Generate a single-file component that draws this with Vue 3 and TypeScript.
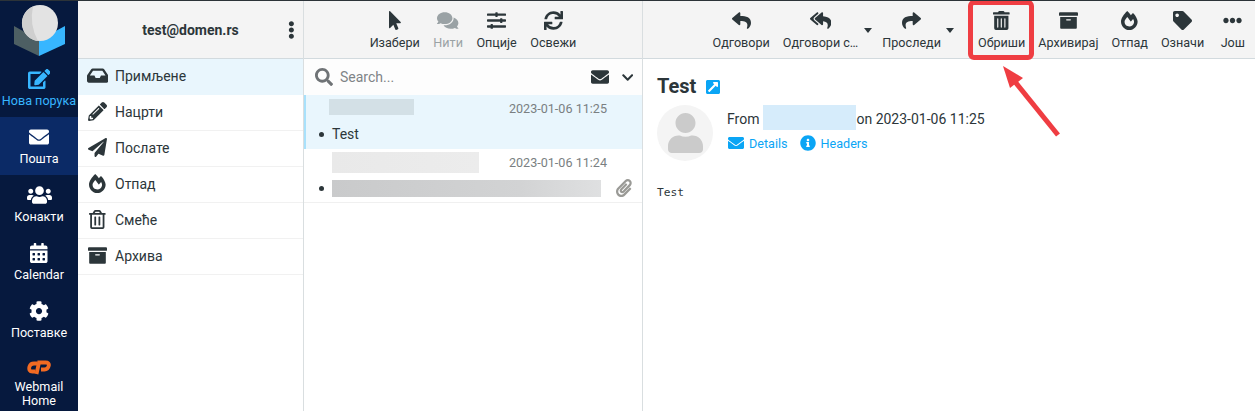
<script setup lang="ts">
type Icon = { w: number; d: string }

const icons: Record<string, Icon> = {
  envelope: { w: 512, d: 'M502.3 190.8c3.9-3.1 9.7-.2 9.7 4.7V400c0 26.5-21.5 48-48 48H48c-26.5 0-48-21.5-48-48V195.6c0-5 5.7-7.8 9.7-4.7 22.4 17.4 52.1 39.5 154.1 113.6 21.1 15.4 56.7 47.8 92.2 47.6 35.7.3 72-32.8 92.3-47.6 102-74.1 131.6-96.3 154-113.7zM256 320c23.2.4 56.6-29.2 73.4-41.4 132.7-96.3 142.8-104.7 173.4-128.7 5.8-4.5 9.2-11.5 9.2-18.9v-19c0-26.5-21.5-48-48-48H48C21.5 64 0 85.5 0 112v19c0 7.4 3.4 14.3 9.2 18.9 30.6 23.9 40.7 32.4 173.4 128.7 16.8 12.2 50.2 41.8 73.4 41.4z' },
  reply: { w: 512, d: 'M8.309 189.836L184.313 37.851C199.719 24.546 224 35.347 224 56.015v80.053c160.629 1.839 288 34.032 288 186.258 0 61.441-39.581 122.309-83.333 154.132-13.653 9.931-33.111-2.533-28.077-18.631 45.344-145.012-21.507-183.51-176.59-185.742V360c0 20.7-24.3 31.453-39.687 18.164l-176.004-152c-11.071-9.562-11.086-26.753 0-36.328z' },
  replyAll: { w: 576, d: 'M136.309 189.836L312.313 37.851C327.72 24.546 352 35.348 352 56.015v82.763c129.182 10.231 224 52.212 224 183.548 0 61.441-39.582 122.309-83.333 154.132-13.653 9.931-33.111-2.533-28.077-18.631 38.512-123.162-3.922-169.482-112.59-182.015v84.175c0 20.701-24.3 31.453-39.687 18.164L136.309 226.164c-11.071-9.561-11.086-26.753 0-36.328zm-128 36.328L184.313 378.15C199.7 391.439 224 380.687 224 359.986v-15.818l-108.606-93.785A55.96 55.96 0 0 1 96 207.998a55.953 55.953 0 0 1 19.393-42.38L224 71.832V56.015c0-20.667-24.28-31.469-39.687-18.164L8.309 189.836c-11.086 9.575-11.071 26.767 0 36.328z' },
  share: { w: 512, d: 'M503.691 189.836L327.687 37.851C312.281 24.546 288 35.347 288 56.015v80.053C127.371 137.907 0 170.1 0 322.326c0 61.441 39.581 122.309 83.333 154.132 13.653 9.931 33.111-2.533 28.077-18.631C66.066 312.814 132.917 274.316 288 272.085V360c0 20.7 24.3 31.453 39.687 18.164l176.004-152c11.071-9.562 11.086-26.753 0-36.328z' },
  trashSolid: { w: 448, d: 'M32 464a48 48 0 0 0 48 48h288a48 48 0 0 0 48-48V128H32zm272-256a16 16 0 0 1 32 0v224a16 16 0 0 1-32 0zm-96 0a16 16 0 0 1 32 0v224a16 16 0 0 1-32 0zm-96 0a16 16 0 0 1 32 0v224a16 16 0 0 1-32 0zM432 32H312l-9.4-18.7A24 24 0 0 0 281.1 0H166.8a23.72 23.72 0 0 0-21.4 13.3L136 32H16A16 16 0 0 0 0 48v32a16 16 0 0 0 16 16h416a16 16 0 0 0 16-16V48a16 16 0 0 0-16-16z' },
  trash: { w: 448, d: 'M268 416h24a12 12 0 0 0 12-12V188a12 12 0 0 0-12-12h-24a12 12 0 0 0-12 12v216a12 12 0 0 0 12 12zM432 80h-82.41l-34-56.7A48 48 0 0 0 274.41 0H173.59a48 48 0 0 0-41.16 23.3L98.41 80H16A16 16 0 0 0 0 96v16a16 16 0 0 0 16 16h16v336a48 48 0 0 0 48 48h288a48 48 0 0 0 48-48V128h16a16 16 0 0 0 16-16V96a16 16 0 0 0-16-16zM171.84 50.91A6 6 0 0 1 177 48h94a6 6 0 0 1 5.15 2.91L293.61 80H154.39zM368 464H80V128h288zm-212-48h24a12 12 0 0 0 12-12V188a12 12 0 0 0-12-12h-24a12 12 0 0 0-12 12v216a12 12 0 0 0 12 12z' },
  archive: { w: 512, d: 'M32 448c0 17.7 14.3 32 32 32h384c17.7 0 32-14.3 32-32V160H32v288zm160-212c0-6.6 5.4-12 12-12h104c6.6 0 12 5.4 12 12v8c0 6.6-5.4 12-12 12H204c-6.6 0-12-5.4-12-12v-8zM480 32H32C14.3 32 0 46.3 0 64v48c0 8.8 7.2 16 16 16h480c8.8 0 16-7.2 16-16V64c0-17.7-14.3-32-32-32z' },
  fire: { w: 448, d: 'M323.56 51.2c-20.8 19.3-39.58 39.59-56.22 59.97C240.08 73.62 206.28 35.53 168 0 69.74 91.17 0 209.96 0 281.6 0 408.85 100.29 512 224 512s224-103.15 224-230.4c0-53.27-51.98-163.14-124.44-230.4zm-19.47 340.65C282.43 407.01 255.72 416 226.86 416 154.71 416 96 368.26 96 290.75c0-38.61 24.31-72.63 72.79-130.75 6.93 7.98 98.83 125.34 98.83 125.34l58.63-66.88c4.14 6.85 7.91 13.55 11.27 19.97 27.35 52.19 15.81 118.97-33.43 153.42z' },
  tag: { w: 512, d: 'M0 252.118V48C0 21.49 21.49 0 48 0h204.118a48 48 0 0 1 33.941 14.059l211.882 211.882c18.745 18.745 18.745 49.137 0 67.882L293.823 497.941c-18.745 18.745-49.137 18.745-67.882 0L14.059 286.059A48 48 0 0 1 0 252.118zM112 64c-26.51 0-48 21.49-48 48s21.49 48 48 48 48-21.49 48-48-21.49-48-48-48z' },
  more: { w: 512, d: 'M328 256c0 39.8-32.2 72-72 72s-72-32.2-72-72 32.2-72 72-72 72 32.2 72 72zm104-72c-39.8 0-72 32.2-72 72s32.2 72 72 72 72-32.2 72-72-32.2-72-72-72zm-352 0c-39.8 0-72 32.2-72 72s32.2 72 72 72 72-32.2 72-72-32.2-72-72-72z' },
  dots: { w: 192, d: 'M96 184c39.8 0 72 32.2 72 72s-32.2 72-72 72-72-32.2-72-72 32.2-72 72-72zM24 80c0 39.8 32.2 72 72 72s72-32.2 72-72S135.8 8 96 8 24 40.2 24 80zm0 352c0 39.8 32.2 72 72 72s72-32.2 72-72-32.2-72-72-72-72 32.2-72 72z' },
  pointer: { w: 320, d: 'M302.189 329.126H196.105l55.831 135.993c3.889 9.428-.555 19.999-9.444 23.999l-49.165 21.427c-9.165 4-19.443-.571-23.332-9.714l-53.053-129.136-86.664 89.138C18.729 472.71 0 463.554 0 447.977V18.299C0 1.899 19.921-6.096 30.277 5.443l284.412 292.542c11.472 11.179 3.007 31.141-12.5 31.141z' },
  comments: { w: 576, d: 'M416 192c0-88.4-93.1-160-208-160S0 103.6 0 192c0 34.3 14.1 65.9 38 92-13.4 30.2-35.5 54.2-35.8 54.5-2.2 2.3-2.8 5.7-1.5 8.7S4.8 352 8 352c36.6 0 66.9-12.3 88.7-25 32.2 15.7 70.3 25 111.3 25 114.9 0 208-71.6 208-160zm122 220c23.9-26 38-57.7 38-92 0-66.9-53.5-124.2-129.3-148.1.9 6.6 1.3 13.3 1.3 20.1 0 105.9-107.7 192-240 192-10.8 0-21.3-.8-31.7-1.9C207.8 439.6 281.8 480 368 480c41 0 79.1-9.2 111.3-25 21.8 12.7 52.1 25 88.7 25 3.2 0 6.1-1.9 7.3-4.8 1.3-2.9.7-6.3-1.5-8.7-.3-.3-22.4-24.2-35.8-54.5z' },
  sliders: { w: 512, d: 'M496 384H160v-16c0-8.8-7.2-16-16-16h-32c-8.8 0-16 7.2-16 16v16H16c-8.8 0-16 7.2-16 16v32c0 8.8 7.2 16 16 16h80v16c0 8.8 7.2 16 16 16h32c8.8 0 16-7.2 16-16v-16h336c8.8 0 16-7.2 16-16v-32c0-8.8-7.2-16-16-16zm0-160h-80v-16c0-8.8-7.2-16-16-16h-32c-8.8 0-16 7.2-16 16v16H16c-8.8 0-16 7.2-16 16v32c0 8.8 7.2 16 16 16h336v16c0 8.8 7.2 16 16 16h32c8.8 0 16-7.2 16-16v-16h80c8.8 0 16-7.2 16-16v-32c0-8.8-7.2-16-16-16zm0-160H288V48c0-8.8-7.2-16-16-16h-32c-8.8 0-16 7.2-16 16v16H16C7.2 64 0 71.2 0 80v32c0 8.8 7.2 16 16 16h208v16c0 8.8 7.2 16 16 16h32c8.8 0 16-7.2 16-16v-16h208c8.8 0 16-7.2 16-16V80c0-8.8-7.2-16-16-16z' },
  sync: { w: 512, d: 'M440.65 12.57l4 82.77A247.16 247.16 0 0 0 255.83 8C134.73 8 33.91 94.92 12.29 209.82A12 12 0 0 0 24.09 224h49.05a12 12 0 0 0 11.67-9.26 175.91 175.91 0 0 1 317-56.94l-101.46-4.86a12 12 0 0 0-12.57 12v47.41a12 12 0 0 0 12 12H500a12 12 0 0 0 12-12V12a12 12 0 0 0-12-12h-47.37a12 12 0 0 0-11.98 12.57zM255.83 432a175.61 175.61 0 0 1-146-77.8l101.8 4.87a12 12 0 0 0 12.57-12v-47.4a12 12 0 0 0-12-12H12a12 12 0 0 0-12 12V500a12 12 0 0 0 12 12h47.35a12 12 0 0 0 12-12.6l-4.15-82.57A247.17 247.17 0 0 0 255.83 504c121.11 0 221.93-86.92 243.55-201.82a12 12 0 0 0-11.8-14.18h-49.05a12 12 0 0 0-11.67 9.26A175.86 175.86 0 0 1 255.83 432z' },
  search: { w: 512, d: 'M505 442.7L405.3 343c-4.5-4.5-10.6-7-17-7H372c27.6-35.3 44-79.7 44-128C416 93.1 322.9 0 208 0S0 93.1 0 208s93.1 208 208 208c48.3 0 92.7-16.4 128-44v16.3c0 6.4 2.5 12.5 7 17l99.7 99.7c9.4 9.4 24.6 9.4 33.9 0l28.3-28.3c9.4-9.4 9.4-24.6.1-34zM208 336c-70.7 0-128-57.2-128-128 0-70.7 57.2-128 128-128 70.7 0 128 57.2 128 128 0 70.7-57.2 128-128 128z' },
  chevron: { w: 448, d: 'M207.029 381.476L12.686 187.132c-9.373-9.373-9.373-24.569 0-33.941l22.667-22.667c9.357-9.357 24.522-9.375 33.901-.04L224 284.505l154.745-154.021c9.379-9.335 24.544-9.317 33.901.04l22.667 22.667c9.373 9.373 9.373 24.569 0 33.941L240.971 381.476c-9.373 9.372-24.569 9.372-33.942 0z' },
  clip: { w: 448, d: 'M43.246 466.142c-58.43-60.289-57.341-157.511 1.386-217.581L254.392 34c44.316-45.332 116.351-45.336 160.671 0 43.89 44.894 43.943 117.329 0 162.276L232.214 383.128c-29.855 30.537-78.633 30.111-107.982-.998-28.275-29.97-27.368-77.473 1.452-106.953l143.743-146.835c6.182-6.314 16.312-6.422 22.626-.241l22.861 22.379c6.315 6.182 6.422 16.312.241 22.626L171.427 319.927c-4.932 5.045-5.236 13.428-.648 18.292 4.372 4.634 11.245 4.711 15.688.165l182.849-186.851c19.613-20.062 19.613-52.725-.011-72.798-19.189-19.627-49.957-19.637-69.154 0L90.39 293.295c-34.763 35.56-35.299 93.12-1.191 128.313 34.01 35.093 88.985 35.137 123.058.286l172.06-175.999c6.177-6.319 16.307-6.433 22.626-.256l22.877 22.364c6.319 6.177 6.434 16.307.256 22.626l-172.06 175.998c-59.576 60.938-155.943 60.216-214.77-.485z' },
  user: { w: 448, d: 'M224 256c70.7 0 128-57.3 128-128S294.7 0 224 0 96 57.3 96 128s57.3 128 128 128zm89.6 32h-16.7c-22.2 10.2-46.9 16-72.9 16s-50.6-5.8-72.9-16h-16.7C60.2 288 0 348.2 0 422.4V464c0 26.5 21.5 48 48 48h352c26.5 0 48-21.5 48-48v-41.6c0-74.2-60.2-134.4-134.4-134.4z' },
  users: { w: 640, d: 'M96 224c35.3 0 64-28.7 64-64s-28.7-64-64-64-64 28.7-64 64 28.7 64 64 64zm448 0c35.3 0 64-28.7 64-64s-28.7-64-64-64-64 28.7-64 64 28.7 64 64 64zm32 32h-64c-17.6 0-33.5 7.1-45.1 18.6 40.3 22.1 68.9 62 75.1 109.4h66c17.7 0 32-14.3 32-32v-32c0-35.3-28.7-64-64-64zm-256 0c61.9 0 112-50.1 112-112S381.9 32 320 32 208 82.1 208 144s50.1 112 112 112zm76.8 32h-8.3c-20.8 10-43.9 16-68.5 16s-47.6-6-68.5-16h-8.3C179.6 288 128 339.6 128 403.2V432c0 26.5 21.5 48 48 48h288c26.5 0 48-21.5 48-48v-28.8c0-63.6-51.6-115.2-115.2-115.2zm-223.7-13.4C161.5 263.1 145.6 256 128 256H64c-35.3 0-64 28.7-64 64v32c0 17.7 14.3 32 32 32h65.9c6.3-47.4 34.9-87.3 75.2-109.4z' },
  calendar: { w: 448, d: 'M0 464c0 26.5 21.5 48 48 48h352c26.5 0 48-21.5 48-48V192H0v272zm320-196c0-6.6 5.4-12 12-12h40c6.6 0 12 5.4 12 12v40c0 6.6-5.4 12-12 12h-40c-6.6 0-12-5.4-12-12v-40zm0 128c0-6.6 5.4-12 12-12h40c6.6 0 12 5.4 12 12v40c0 6.6-5.4 12-12 12h-40c-6.6 0-12-5.4-12-12v-40zM192 268c0-6.6 5.4-12 12-12h40c6.6 0 12 5.4 12 12v40c0 6.6-5.4 12-12 12h-40c-6.6 0-12-5.4-12-12v-40zm0 128c0-6.6 5.4-12 12-12h40c6.6 0 12 5.4 12 12v40c0 6.6-5.4 12-12 12h-40c-6.6 0-12-5.4-12-12v-40zM64 268c0-6.6 5.4-12 12-12h40c6.6 0 12 5.4 12 12v40c0 6.6-5.4 12-12 12H76c-6.6 0-12-5.4-12-12v-40zm0 128c0-6.6 5.4-12 12-12h40c6.6 0 12 5.4 12 12v40c0 6.6-5.4 12-12 12H76c-6.6 0-12-5.4-12-12v-40zM400 64h-48V16c0-8.8-7.2-16-16-16h-32c-8.8 0-16 7.2-16 16v48H160V16c0-8.8-7.2-16-16-16h-32c-8.8 0-16 7.2-16 16v48H48C21.5 64 0 85.5 0 112v48h448v-48c0-26.5-21.5-48-48-48z' },
  cog: { w: 512, d: 'M487.4 315.7l-42.6-24.6c4.3-23.2 4.3-47 0-70.2l42.6-24.6c4.9-2.8 7.1-8.6 5.5-14-11.1-35.6-30-67.8-54.7-94.6-3.8-4.1-10-5.1-14.8-2.3L380.8 110c-17.9-15.4-38.5-27.3-60.8-35.1V25.8c0-5.6-3.9-10.5-9.4-11.7-36.7-8.2-74.3-7.8-109.2 0-5.5 1.2-9.4 6.1-9.4 11.7V75c-22.2 7.9-42.8 19.8-60.8 35.1L88.7 85.5c-4.9-2.8-11-1.9-14.8 2.3-24.7 26.7-43.6 58.9-54.7 94.6-1.7 5.4.6 11.2 5.5 14L67.3 221c-4.3 23.2-4.3 47 0 70.2l-42.6 24.6c-4.9 2.8-7.1 8.6-5.5 14 11.1 35.6 30 67.8 54.7 94.6 3.8 4.1 10 5.1 14.8 2.3l42.6-24.6c17.9 15.4 38.5 27.3 60.8 35.1v49.2c0 5.6 3.9 10.5 9.4 11.7 36.7 8.2 74.3 7.8 109.2 0 5.5-1.2 9.4-6.1 9.4-11.7v-49.2c22.2-7.9 42.8-19.8 60.8-35.1l42.6 24.6c4.9 2.8 11 1.9 14.8-2.3 24.7-26.7 43.6-58.9 54.7-94.6 1.5-5.5-.7-11.3-5.6-14.1zM256 336c-44.1 0-80-35.9-80-80s35.9-80 80-80 80 35.9 80 80-35.9 80-80 80z' },
  edit: { w: 576, d: 'M402.6 83.2l90.2 90.2c3.8 3.8 3.8 10 0 13.8L274.4 405.6l-92.8 10.3c-12.4 1.4-22.9-9.1-21.5-21.5l10.3-92.8L388.8 83.2c3.8-3.8 10-3.8 13.8 0zm162-22.9l-48.8-48.8c-15.2-15.2-39.9-15.2-55.2 0l-35.4 35.4c-3.8 3.8-3.8 10 0 13.8l90.2 90.2c3.8 3.8 10 3.8 13.8 0l35.4-35.4c15.2-15.3 15.2-40 0-55.2zM384 346.2V448H64V128h229.8c3.2 0 6.2-1.3 8.5-3.5l40-40c7.6-7.6 2.2-20.5-8.5-20.5H48C21.5 64 0 85.5 0 112v352c0 26.5 21.5 48 48 48h352c26.5 0 48-21.5 48-48V306.2c0-10.7-12.9-16-20.5-8.5l-40 40c-2.2 2.3-3.5 5.3-3.5 8.5z' },
  inbox: { w: 576, d: 'M567.938 243.908L462.25 85.374A48.003 48.003 0 0 0 422.311 64H153.689a48 48 0 0 0-39.938 21.374L8.062 243.908A47.994 47.994 0 0 0 0 270.533V400c0 26.51 21.49 48 48 48h480c26.51 0 48-21.49 48-48V270.533a47.994 47.994 0 0 0-8.062-26.625zM162.252 128h251.497l85.333 128H376l-32 64H232l-32-64H76.918l85.334-128z' },
  pencil: { w: 512, d: 'M497.9 142.1l-46.1 46.1c-4.7 4.7-12.3 4.7-17 0l-111-111c-4.7-4.7-4.7-12.3 0-17l46.1-46.1c18.7-18.7 49.1-18.7 67.9 0l60.1 60.1c18.8 18.7 18.8 49.1 0 67.9zM284.2 99.8L21.6 362.4.4 483.9c-2.9 16.4 11.4 30.6 27.8 27.8l121.5-21.3 262.6-262.6c4.7-4.7 4.7-12.3 0-17l-111-111c-4.8-4.7-12.4-4.7-17.1 0zM124.1 339.9c-5.5-5.5-5.5-14.3 0-19.8l154-154c5.5-5.5 14.3-5.5 19.8 0s5.5 14.3 0 19.8l-154 154c-5.5 5.5-14.3 5.5-19.8 0zM88 424h48v36.3l-64.5 11.3-31.1-31.1L51.7 376H88v48z' },
  plane: { w: 512, d: 'M476 3.2L12.5 270.6c-18.1 10.4-15.8 35.6 2.2 43.2L121 358.4l287.3-253.2c5.5-4.9 13.3 2.6 8.6 8.3L176 407v80.5c0 23.6 28.5 32.9 42.5 15.8L282 426l124.6 52.2c14.2 6 30.4-2.9 33-18.2l72-432C515 7.8 493.3-6.8 476 3.2z' },
  info: { w: 512, d: 'M256 8C119.043 8 8 119.083 8 256c0 136.997 111.043 248 248 248s248-111.003 248-248C504 119.083 392.957 8 256 8zm0 110c23.196 0 42 18.804 42 42s-18.804 42-42 42-42-18.804-42-42 18.804-42 42-42zm56 254c0 6.627-5.373 12-12 12h-88c-6.627 0-12-5.373-12-12v-24c0-6.627 5.373-12 12-12h12v-64h-12c-6.627 0-12-5.373-12-12v-24c0-6.627 5.373-12 12-12h64c6.627 0 12 5.373 12 12v100h12c6.627 0 12 5.373 12 12v24z' },
  external: { w: 448, d: 'M448 80v352c0 26.51-21.49 48-48 48H48c-26.51 0-48-21.49-48-48V80c0-26.51 21.49-48 48-48h352c26.51 0 48 21.49 48 48zm-88 16H248.029c-21.313 0-32.08 25.861-16.971 40.971l31.984 31.987L67.515 364.485c-4.686 4.686-4.686 12.284 0 16.971l31.029 31.029c4.687 4.686 12.285 4.686 16.971 0l195.526-195.526 31.988 31.991C357.058 263.977 384 253.425 384 231.979V120c0-13.255-10.745-24-24-24z' }
}

const vb = (n: string) => `0 0 ${icons[n].w} 512`

const nav = [
  { icon: 'edit', label: 'Нова порука', cls: 'compose' },
  { icon: 'envelope', label: 'Пошта', cls: 'active' },
  { icon: 'users', label: 'Конакти', cls: '' },
  { icon: 'calendar', label: 'Calendar', cls: '' },
  { icon: 'cog', label: 'Поставке', cls: '' }
]

const folders = [
  { icon: 'inbox', label: 'Примљене', cls: 'selected' },
  { icon: 'pencil', label: 'Нацрти', cls: '' },
  { icon: 'plane', label: 'Послате', cls: '' },
  { icon: 'fire', label: 'Отпад', cls: '' },
  { icon: 'trash', label: 'Смеће', cls: '' },
  { icon: 'archive', label: 'Архива', cls: '' }
]

const listTools = [
  { icon: 'pointer', label: 'Изабери', cls: '' },
  { icon: 'comments', label: 'Нити', cls: 'disabled' },
  { icon: 'sliders', label: 'Опције', cls: '' },
  { icon: 'sync', label: 'Освежи', cls: '' }
]

const mailTools = [
  { icon: 'reply', label: 'Одговори', cls: '' },
  { icon: 'replyAll', label: 'Одговори с…', cls: 'drop drop-a' },
  { icon: 'share', label: 'Проследи', cls: 'drop drop-b' },
  { icon: 'trashSolid', label: 'Обриши', cls: '' },
  { icon: 'archive', label: 'Архивирај', cls: '' },
  { icon: 'fire', label: 'Отпад', cls: '' },
  { icon: 'tag', label: 'Означи', cls: '' },
  { icon: 'more', label: 'Још', cls: 'last' }
]
</script>

<template>
  <div class="app">
    <nav class="rail">
      <div class="logo">
        <svg viewBox="0 1 78 58" width="78" height="58">
          <polygon points="14,26 39,40 39,56 14,44" fill="#4d5f63" />
          <polygon points="65,26 39,40 39,56 65,44" fill="#37b6ff" />
          <circle cx="40" cy="23" r="18" fill="#e3e3e3" />
          <path d="M33 6.4Q29 24 38 40.9A18 18 0 0 1 33 6.4Z" fill="#cfcfcf" />
        </svg>
      </div>
      <a v-for="n in nav" :key="n.label" class="rail-item" :class="n.cls">
        <svg class="rail-icon" :viewBox="vb(n.icon)"><path :d="icons[n.icon].d" /></svg>
        <span>{{ n.label }}</span>
      </a>
      <a class="rail-item home">
        <svg class="cp" viewBox="0 0 24 15">
          <path d="M10 3.5H7Q3.5 3.5 2.5 6.5 1.2 11.5 5.5 11.5H8.5" />
          <path d="M9.5 14L12 2.5H18.5Q22.5 2.5 21.8 5.7 21 9.5 17.5 9.5H14" />
        </svg>
        <span>Webmail<br />Home</span>
      </a>
    </nav>

    <section class="folders">
      <header class="bar account">
        <strong>test@domen.rs</strong>
        <svg class="dots" :viewBox="vb('dots')"><path :d="icons.dots.d" /></svg>
      </header>
      <a v-for="f in folders" :key="f.label" class="folder" :class="f.cls">
        <span class="folder-icon">
          <svg :viewBox="vb(f.icon)"><path :d="icons[f.icon].d" /></svg>
        </span>
        {{ f.label }}
      </a>
    </section>

    <section class="list">
      <header class="bar center">
        <a v-for="t in listTools" :key="t.label" class="tool" :class="t.cls">
          <svg :viewBox="vb(t.icon)"><path :d="icons[t.icon].d" /></svg>
          <span>{{ t.label }}</span>
        </a>
      </header>
      <div class="search">
        <svg class="search-icon" :viewBox="vb('search')"><path :d="icons.search.d" /></svg>
        <span class="placeholder">Search...</span>
        <svg class="mail-icon" :viewBox="vb('envelope')"><path :d="icons.envelope.d" /></svg>
        <svg class="chev-icon" :viewBox="vb('chevron')"><path :d="icons.chevron.d" /></svg>
      </div>
      <div class="msg current">
        <div class="msg-top">
          <i class="blur b1"></i>
          <time>2023-01-06 11:25</time>
        </div>
        <div class="msg-sub"><b class="dot"></b>Test</div>
      </div>
      <div class="msg second">
        <div class="msg-top">
          <i class="blur b2"></i>
          <time>2023-01-06 11:24</time>
        </div>
        <div class="msg-sub">
          <b class="dot"></b><i class="blur b3"></i>
          <svg class="clip" :viewBox="vb('clip')"><path :d="icons.clip.d" /></svg>
        </div>
      </div>
    </section>

    <section class="mail">
      <header class="bar end">
        <a v-for="t in mailTools" :key="t.label" class="tool" :class="t.cls">
          <svg :viewBox="vb(t.icon)"><path :d="icons[t.icon].d" /></svg>
          <span>{{ t.label }}</span>
        </a>
      </header>
      <div class="body">
        <h1>Test <svg class="ext" :viewBox="vb('external')"><path :d="icons.external.d" /></svg></h1>
        <div class="sender">
          <div class="avatar">
            <svg :viewBox="vb('user')"><path :d="icons.user.d" /></svg>
          </div>
          <div class="meta">
            <div class="from"><span>From</span><i class="blur b4"></i><span>on 2023-01-06 11:25</span></div>
            <div class="links">
              <a><svg :viewBox="vb('envelope')"><path :d="icons.envelope.d" /></svg>Details</a>
              <a><svg :viewBox="vb('info')"><path :d="icons.info.d" /></svg>Headers</a>
            </div>
          </div>
        </div>
        <pre>Test</pre>
      </div>
      <div class="hl-box"></div>
      <svg class="hl-arrow" viewBox="0 0 70 80" width="70" height="80">
        <line x1="66" y1="71" x2="20" y2="14" stroke="#ef3d42" stroke-width="5" />
        <polygon points="11,2 31,14 18,24" fill="#ef3d42" />
      </svg>
    </section>
  </div>
</template>

<style>
html, body { margin: 0; background: #fff; }
</style>

<style scoped>
.app {
  display: flex;
  width: 1255px;
  height: 411px;
  overflow: hidden;
  box-sizing: border-box;
  border-top: 1px solid #2c3338;
  font-family: Roboto, "Noto Sans", sans-serif;
  font-size: 14px;
  color: #2c363a;
  background: #fff;
}
svg { fill: currentColor; display: block; }

/* left rail */
.rail {
  width: 78px;
  flex: none;
  background: #06193e;
  color: #fff;
  display: flex;
  flex-direction: column;
}
.logo { height: 58px; }
.rail-item {
  height: 58px;
  display: flex;
  flex-direction: column;
  align-items: center;
  font-size: 12.6px;
  line-height: 15px;
  white-space: nowrap;
}
.rail-icon { height: 20px; margin: 10px 0 4px; }
.rail-item.compose { color: #37b6ff; }
.rail-item.active { background: #0b2a66; }
.rail-item.home { height: auto; line-height: 14px; text-align: center; }
.cp { width: 24px; height: 15px; margin: 11px 0 5px; fill: none; stroke: #f26a22; stroke-width: 3.8; }

/* shared header */
.bar {
  height: 58px;
  box-sizing: border-box;
  flex: none;
  display: flex;
  align-items: flex-start;
  background: #f4f4f4;
  border-bottom: 1px solid #d2dade;
}
.center { justify-content: center; }
.end { justify-content: flex-end; padding-right: 3px; }

.folders {
  width: 226px;
  flex: none;
  box-sizing: border-box;
  border-right: 1px solid #d9dee0;
}
.account { position: relative; justify-content: center; align-items: center; font-size: 14px; }
.account strong { font-weight: 700; }
.dots { position: absolute; right: 8px; top: 20px; height: 18px; }
.folder {
  height: 36px;
  box-sizing: border-box;
  display: flex;
  align-items: center;
  border-bottom: 1px solid #f1f1f1;
  padding-bottom: 2px;
  font-size: 14px;
}
.folder.selected { background: #e9f6fd; border-bottom-color: #e9f6fd; }
.folder-icon { width: 35px; flex: none; display: flex; justify-content: center; padding-left: 2px; }
.folder-icon svg { height: 19px; }

.list {
  width: 339px;
  flex: none;
  box-sizing: border-box;
  border-right: 1px solid #d9dee0;
}
.tool {
  display: flex;
  flex-direction: column;
  align-items: center;
  padding: 0 6.75px;
  font-size: 12.6px;
  line-height: 16px;
  white-space: nowrap;
  position: relative;
}
.end .tool { padding: 0 6.5px; }
.tool svg { height: 19px; margin: 10px 0 5px; }
.tool.disabled { color: #9aa2a5; }
.drop::after {
  content: "";
  position: absolute;
  top: 27px;
  right: -7px;
  border: 4px solid transparent;
  border-top: 5px solid #2c363a;
  border-bottom: 0;
}
.drop-a { margin-right: 11px; }
.drop-b { margin-right: 24px; }
.end .last { padding: 0 7px 0 10px; }

.search {
  height: 36px;
  box-sizing: border-box;
  display: flex;
  align-items: center;
  padding: 0 7px 0 11px;
  background: #fdfdfd;
}
.search-icon { height: 18px; color: #6f7376; margin-right: 7px; }
.placeholder { flex: 1; font-size: 14px; color: #7f8487; }
.mail-icon { height: 18px; margin-right: 13px; }
.chev-icon { height: 13px; margin-right: 2px; }

.msg {
  height: 54px;
  box-sizing: border-box;
  padding-left: 12px;
  padding-right: 8px;
}
.msg.current { background: #e9f6fd; border-left: 2px solid #a9e1fb; padding-left: 10px; }
.msg.second { border-bottom: 1px solid #f0f0f0; }
.msg-top { height: 26px; display: flex; align-items: center; justify-content: space-between; padding-right: 27px; padding-left: 16px; }
.current .msg-top { padding-left: 13px; }
.msg-top time { font-size: 12.6px; color: #7a7f82; margin-left: auto; }
.msg-sub { height: 26px; display: flex; align-items: center; font-size: 14px; color: #2c363a; }
.dot { width: 5px; height: 5px; border-radius: 50%; background: #2c363a; margin: 0 8px 0 3px; flex: none; }
.blur { display: inline-block; font-style: normal; }
.b1 { width: 85px; height: 16px; margin-top: -2px; background: #d3e0e6; }
.b2 { width: 147px; height: 21px; background: linear-gradient(90deg, #e9e9e9, #ececec); }
.b3 { width: 269px; height: 17px; background: linear-gradient(90deg, #c9cacb, #d2d3d4 70%, #dfe0e1); }
.b4 { width: 93px; height: 25px; margin-left: 4px; background: #d6ecfb; flex: none; }
.clip { height: 18px; margin-left: 15px; color: #9a9a96; }

.mail { flex: 1; position: relative; }
.body { padding: 13px 14px; }
h1 {
  margin: 0;
  display: flex;
  align-items: center;
  gap: 10px;
  font-size: 20px;
  line-height: 28px;
  font-weight: 700;
}
.ext { height: 16px; margin-top: 2px; color: #0aa5f5; }
.sender { display: flex; margin-top: 5px; }
.avatar {
  width: 56px;
  height: 56px;
  border-radius: 50%;
  background: #f4f4f4;
  display: flex;
  align-items: center;
  justify-content: center;
  flex: none;
  color: #cbcbcb;
}
.avatar svg { height: 40px; }
.meta { margin-left: 14px; }
.from { display: flex; font-size: 14px; height: 25px; line-height: 28px; white-space: nowrap; }
.links { display: flex; gap: 12px; padding-left: 1px; font-size: 12.6px; color: #0aa5f5; margin-top: 5px; }
.links a { display: flex; align-items: center; gap: 5px; }
.links svg { height: 16px; }
pre { margin: 24px 0 0; font-family: "DejaVu Sans Mono", monospace; font-size: 11.2px; line-height: 15px; }

/* annotation drawn over the screenshot */
.hl-box {
  position: absolute;
  left: 325px;
  top: -1px;
  width: 66px;
  height: 60px;
  box-sizing: border-box;
  border: 5px solid #ef3d42;
  border-radius: 6px;
}
.hl-arrow { position: absolute; left: 349px; top: 63px; }
</style>
